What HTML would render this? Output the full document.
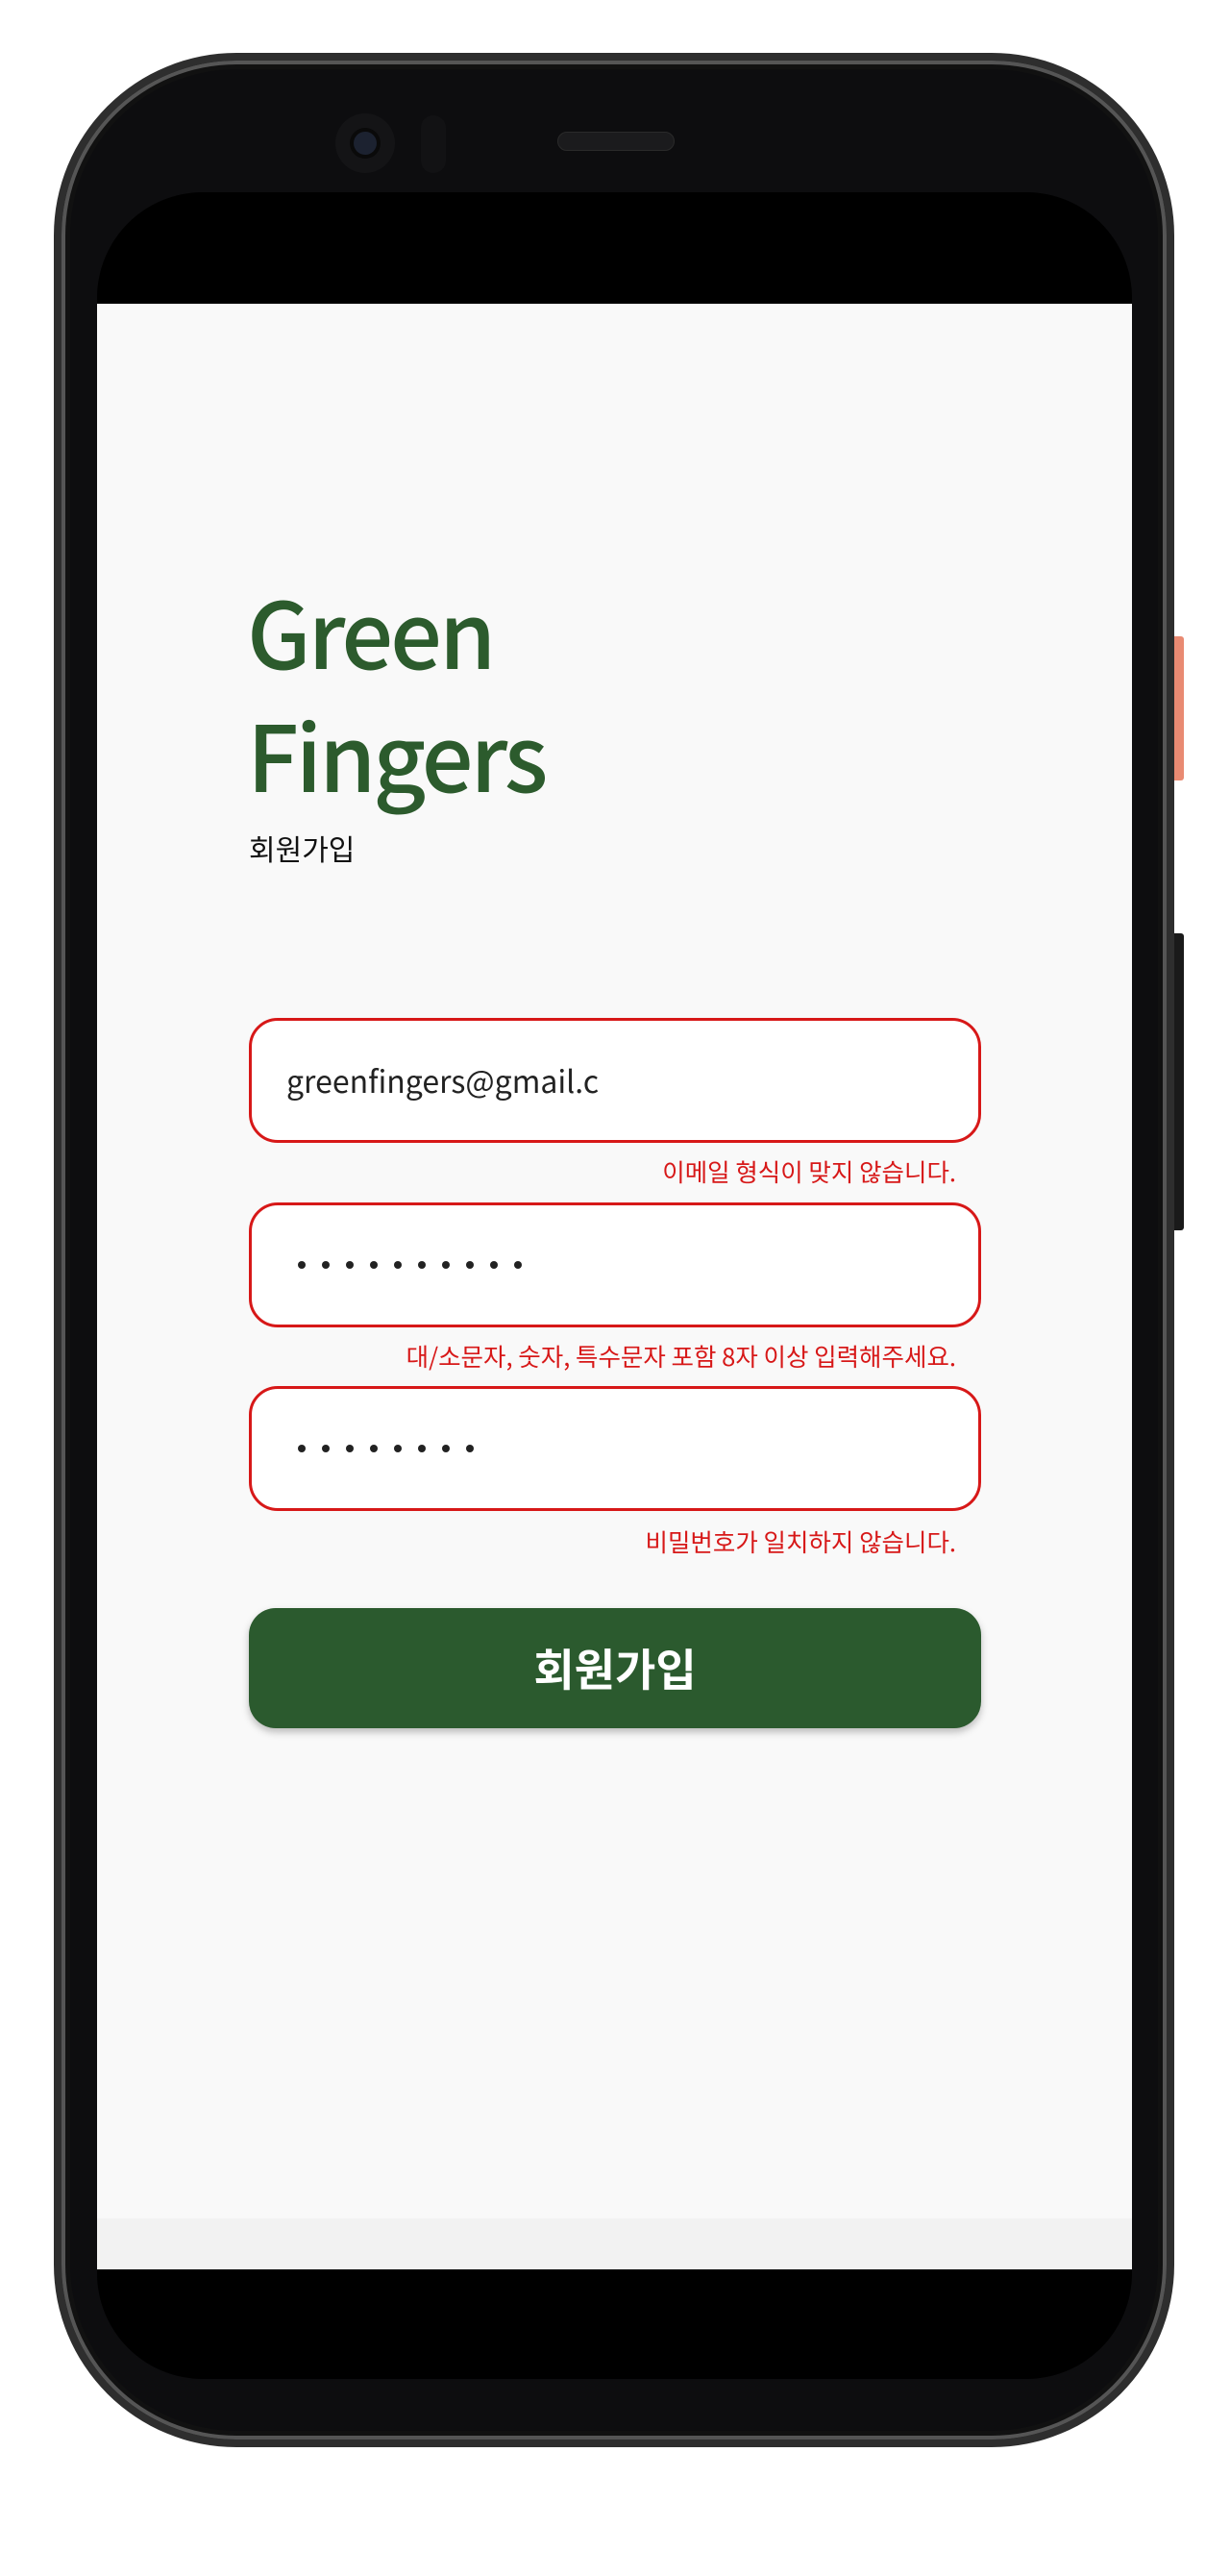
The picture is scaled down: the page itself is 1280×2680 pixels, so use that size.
<!DOCTYPE html>
<html><head><meta charset="utf-8"><style>
*{margin:0;padding:0;box-sizing:border-box}
body{width:1280px;height:2680px;background:#fff;position:relative;overflow:hidden;font-family:"Liberation Sans","Noto Sans CJK KR",sans-serif}
.phone{position:absolute;left:56px;top:55px;width:1166px;height:2491px;border-radius:190px;background:#2e2e2e}
.phone2{position:absolute;left:64px;top:63px;width:1150px;height:2475px;border-radius:182px;background:#0d0d0f;box-shadow:inset 0 0 0 4px #555,inset 0 0 0 9px #111}
.scr{position:absolute;left:101px;top:200px;width:1077px;height:2275px;border-radius:110px;background:#000;overflow:hidden}
.content{position:absolute;left:0;top:116px;width:1077px;height:1992px;background:#f9f9f9}
.nav{position:absolute;left:0;top:2108px;width:1077px;height:53px;background:#f2f2f2}
.cam{position:absolute;left:349px;top:118px;width:62px;height:62px;border-radius:50%;background:#141416}
.cam:after{content:"";position:absolute;left:19px;top:19px;width:24px;height:24px;border-radius:50%;background:#1c2230;box-shadow:0 0 0 4px #0a0a0a}
.sens{position:absolute;left:438px;top:120px;width:26px;height:60px;border-radius:13px;background:#121214}
.spk{position:absolute;left:580px;top:137px;width:122px;height:20px;border-radius:10px;background:#1b1b1d;border:1px solid #2a2a2a}
.btnR{position:absolute;left:1222px;top:662px;width:10px;height:150px;background:#e98a72;border-radius:0 3px 3px 0}
.btnB{position:absolute;left:1222px;top:971px;width:10px;height:309px;background:#1a1a1a;border-radius:0 3px 3px 0}
h1{position:absolute;left:257px;top:592px;font-family:"Noto Sans CJK KR","Liberation Sans",sans-serif;font-weight:500;font-size:95px;line-height:128px;color:#2c5b2d;letter-spacing:-3px}
.sub{position:absolute;left:259px;top:860px;font-family:"Noto Sans CJK KR",sans-serif;font-size:30px;color:#111}
.in{position:absolute;left:259px;width:762px;height:130px;border:3px solid #d71818;border-radius:30px;background:#fff}
.in span{position:absolute;left:36px;top:0;line-height:124px;font-size:32px;color:#222;font-family:"Noto Sans CJK KR",sans-serif}
.dots{position:absolute;left:48px;top:58px;display:flex;gap:17px}
.dots i{width:8px;height:8px;border-radius:50%;background:#222}
.err{position:absolute;right:285px;font-family:"Noto Sans CJK KR",sans-serif;font-size:25.5px;color:#d71818}
.go{position:absolute;left:259px;top:1673px;width:762px;height:125px;border-radius:28px;background:#2b5a2e;color:#fff;font-family:"Noto Sans CJK KR",sans-serif;font-weight:700;font-size:46px;text-align:center;line-height:125px;box-shadow:0 4px 8px rgba(0,0,0,.25)}
</style></head><body>
<div class="btnR"></div><div class="btnB"></div>
<div class="phone"></div><div class="phone2"></div>
<div class="cam"></div><div class="sens"></div><div class="spk"></div>
<div class="scr"><div class="content"></div><div class="nav"></div></div>
<h1>Green<br>Fingers</h1>
<div class="sub">회원가입</div>
<div class="in" style="top:1059px"><span>greenfingers@gmail.c</span></div>
<div class="err" style="top:1200px">이메일 형식이 맞지 않습니다.</div>
<div class="in" style="top:1251px"><div class="dots"><i></i><i></i><i></i><i></i><i></i><i></i><i></i><i></i><i></i><i></i></div></div>
<div class="err" style="top:1392px">대/소문자, 숫자, 특수문자 포함 8자 이상 입력해주세요.</div>
<div class="in" style="top:1442px"><div class="dots"><i></i><i></i><i></i><i></i><i></i><i></i><i></i><i></i></div></div>
<div class="err" style="top:1585px">비밀번호가 일치하지 않습니다.</div>
<div class="go">회원가입</div>
</body></html>
